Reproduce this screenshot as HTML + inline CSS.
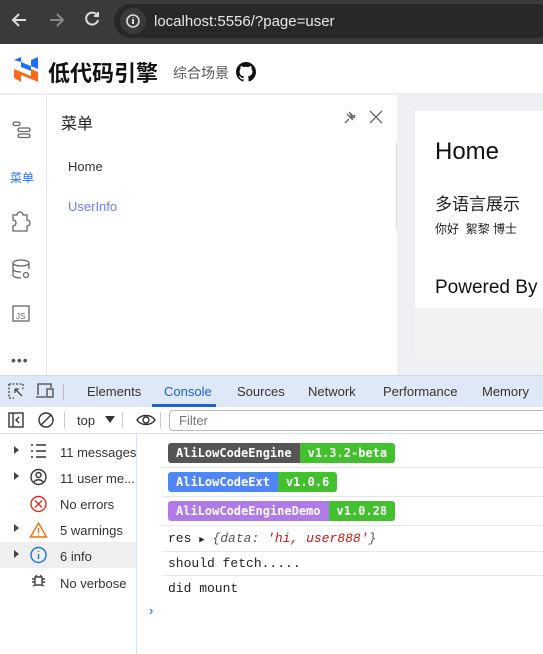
<!DOCTYPE html>
<html><head><meta charset="utf-8"><style>
*{margin:0;padding:0;box-sizing:border-box}
body{width:543px;height:654px;overflow:hidden;font-family:"Liberation Sans","Noto Sans CJK SC",sans-serif;background:#fff;position:relative}
.a{position:absolute}
.mono{font-family:"Liberation Mono","DejaVu Sans Mono",monospace}
.badge{position:absolute;height:20px;font:bold 12px "DejaVu Sans Mono","Liberation Mono",monospace;color:#fff;line-height:20px;display:flex;border-radius:3px;overflow:hidden}
.badge span{padding:0 8px}
.g{background:#42c02e}
.sb{font-size:13px;color:#333}
.line{position:absolute;left:162px;right:0;height:1px;background:#e4e8ee}
</style></head><body>
<div class="a" style="left:0;top:0;width:543px;height:44px;background:#3a3a3a"></div>
<div class="a" style="left:114px;top:4px;width:440px;height:34px;border-radius:17px;background:#282828"></div>
<div class="a" style="left:120px;top:8px;width:26px;height:26px;border-radius:13px;background:#3a3a3a"></div>
<svg class="a" style="left:0;top:0" width="150" height="44"><g stroke="#ddd" stroke-width="2" fill="none"><path d="M26 20H13M19 14l-6 6 6 6"/><path d="M50 20h13M57 14l6 6-6 6" stroke="#888"/><path d="M97 15a6 6 0 1 0 1 5M98 12v4h-4"/><circle cx="133" cy="21" r="6" stroke-width="1.6"/><path d="M133 19v5M133 17v.5"/></g></svg>
<div class="a" style="left:154px;top:13px;font-size:15px;color:#e8e8e8">localhost:5556/?page=user</div>
<svg class="a" style="left:14px;top:56px" width="24" height="26"><path d="M0 4l7-3v10l10 4V4l7-3v12L7 6z" fill="#1f6fff"/><path d="M0 13l17 7V13l7 3v10l-7-3-10-4v7L0 22z" fill="#ff6a1a"/></svg>
<div class="a" style="left:48px;top:56px;font-size:22px;font-weight:bold;color:#111">低代码引擎</div>
<div class="a" style="left:173px;top:63px;font-size:14px;color:#555">综合场景</div>
<svg class="a" style="left:236px;top:62px" width="20" height="20" viewBox="0 0 16 16"><path fill="#111" d="M8 0C3.6 0 0 3.6 0 8c0 3.5 2.3 6.5 5.5 7.6.4.1.5-.2.5-.4v-1.4c-2.2.5-2.7-1-2.7-1-.4-.9-.9-1.2-.9-1.2-.7-.5.1-.5.1-.5.8.1 1.2.8 1.2.8.7 1.2 1.9.9 2.3.7.1-.5.3-.9.5-1.1-1.8-.2-3.6-.9-3.6-4 0-.9.3-1.6.8-2.1-.1-.2-.4-1 .1-2.1 0 0 .7-.2 2.2.8.6-.2 1.3-.3 2-.3s1.4.1 2 .3c1.5-1 2.2-.8 2.2-.8.4 1.1.2 1.9.1 2.1.5.6.8 1.3.8 2.1 0 3.1-1.9 3.7-3.6 3.9.3.3.5.8.5 1.5v2.2c0 .2.1.5.6.4C13.7 14.5 16 11.5 16 8c0-4.4-3.6-8-8-8z"/></svg>
<div class="a" style="left:0;top:93px;width:543px;height:2px;background:#edeef3"></div>
<div class="a" style="left:46px;top:95px;width:1px;height:280px;background:#e8e9ee"></div>
<svg class="a" style="left:0;top:95px" width="46" height="280" fill="none" stroke="#666" stroke-width="1.3">
<rect x="13" y="27" width="7" height="3.5" rx="1.7"/><rect x="18" y="33" width="12" height="3.5" rx="1.7"/><rect x="18" y="39" width="12" height="3.5" rx="1.7"/>
<path d="M13 120h4a3 3 0 0 1 6 0h4v5a3 3 0 0 1 0 6v5H13v-5a3 3 0 0 0 0-6z"/>
<ellipse cx="21" cy="168" rx="8" ry="3"/><path d="M13 168v12c0 2 4 3 8 3M29 168v6M13 174c0 2 4 3 8 3"/><circle cx="26" cy="180" r="2.5"/>
<rect x="13" y="211" width="16" height="15"/>
</svg>
<div class="a" style="left:16px;top:312px;font-size:8px;color:#666">JS</div>
<div class="a" style="left:10px;top:169px;font-size:12px;color:#1f6fff">菜单</div>
<div class="a" style="left:11px;top:352px;font-size:14px;color:#555;letter-spacing:1px">•••</div>
<div class="a" style="left:61px;top:110px;font-size:16px;color:#222">菜单</div>
<svg class="a" style="left:342px;top:109px" width="42" height="16" fill="none" stroke="#666" stroke-width="1.3"><path d="M3 14l4-4M5 5l6 6M7 3l6 6M8 4l2 5 3-3"/><path d="M28 2l12 12M40 2L28 14"/></svg>
<div class="a" style="left:68px;top:159px;font-size:13px;color:#333">Home</div>
<div class="a" style="left:68px;top:199px;font-size:13px;color:#6c7cff">UserInfo</div>
<div class="a" style="left:397px;top:95px;width:146px;height:280px;background:#eef0f3"></div>
<div class="a" style="left:396px;top:143px;width:1px;height:87px;background:#ddd"></div>
<div class="a" style="left:415px;top:111px;width:128px;height:247px;background:#f2f2f3"></div>
<div class="a" style="left:415px;top:111px;width:128px;height:197px;background:#fff"></div>
<div class="a" style="left:435px;top:138px;font-size:24px;color:#111">Home</div>
<div class="a" style="left:435px;top:190px;font-size:17px;color:#222">多语言展示</div>
<div class="a" style="left:435px;top:220px;font-size:12px;color:#222">你好&nbsp; 絮黎 博士</div>
<div class="a" style="left:435px;top:277px;font-size:19px;color:#111">Powered By</div>
<div class="a" style="left:0;top:375px;width:543px;height:32px;background:#dfe8f6;border-top:1px solid #cfd8e6"></div>
<svg class="a" style="left:0;top:375px" width="70" height="32" fill="none" stroke="#444" stroke-width="1.3"><path d="M9 9h14v5M9 9v14h5" stroke-dasharray="2 1.5"/><path d="M15 14l7 7M15 14h4M15 14v4"/><path d="M38 20V9h13v4M36 22h10"/><rect x="47" y="14" width="6" height="8"/></svg>
<div class="a" style="left:63px;top:384px;width:1px;height:16px;background:#bbb"></div>
<div class="a sb" style="left:87px;top:384px;color:#333">Elements</div>
<div class="a sb" style="left:164px;top:384px;color:#1a62d6">Console</div>
<div class="a" style="left:152px;top:404px;width:64px;height:3px;background:#1a62d6"></div>
<div class="a sb" style="left:237px;top:384px">Sources</div>
<div class="a sb" style="left:308px;top:384px">Network</div>
<div class="a sb" style="left:383px;top:384px">Performance</div>
<div class="a sb" style="left:482px;top:384px">Memory</div>
<div class="a" style="left:0;top:407px;width:543px;height:27px;background:#fff;border-bottom:1px solid #d6e2f3"></div>
<svg class="a" style="left:0;top:407px" width="170" height="27" fill="none" stroke="#333" stroke-width="1.4"><rect x="9" y="6" width="14" height="14"/><path d="M13 6v14M19 10l-3 3 3 3" /><circle cx="46" cy="13" r="7"/><path d="M41 18l10-10"/><path d="M137 13c4-6 14-6 18 0-4 6-14 6-18 0z"/><circle cx="146" cy="13" r="3"/></svg>
<div class="a" style="left:64px;top:412px;width:1px;height:16px;background:#ccc"></div>
<div class="a sb" style="left:77px;top:413px">top</div>
<div class="a" style="left:105px;top:416px;border:5px solid transparent;border-top:7px solid #333"></div>
<div class="a" style="left:122px;top:412px;width:1px;height:16px;background:#ccc"></div>
<div class="a" style="left:160px;top:412px;width:1px;height:16px;background:#ccc"></div>
<div class="a" style="left:169px;top:410px;width:380px;height:21px;border:1px solid #bbb;border-radius:4px"></div>
<div class="a" style="left:179px;top:413px;font-size:13px;color:#777">Filter</div>
<div class="a" style="left:136px;top:434px;width:1px;height:220px;background:#d6e2f3"></div>
<div class="a" style="left:0;top:542px;width:136px;height:26px;background:#efefef"></div>
<svg class="a" style="left:0;top:434px" width="60" height="160" fill="none" stroke-width="1.4">
<g fill="#444"><path d="M14 12l5 4-5 4z"/><path d="M14 38l5 4-5 4z"/><path d="M14 90l5 4-5 4z"/><path d="M14 116l5 4-5 4z"/></g>
<path stroke="#333" d="M31 11h2M36 11h10M31 17h2M36 17h10M31 23h2M36 23h10"/>
<circle cx="38.5" cy="43" r="7.5" stroke="#333"/><circle cx="38.5" cy="41" r="2.5" stroke="#333"/><path stroke="#333" d="M34 48c2-3 7-3 9 0"/>
<circle cx="38.5" cy="70" r="7.5" stroke="#d93025"/><path stroke="#d93025" d="M35 66.5l7 7M42 66.5l-7 7"/>
<path stroke="#e8710a" d="M38.5 89l8 14h-16z"/><path stroke="#e8710a" d="M38.5 94v5M38.5 100.5v1"/>
<circle cx="38.5" cy="121" r="7.5" stroke="#1a73e8"/><path stroke="#1a73e8" d="M38.5 120v5M38.5 117v1"/>
<path stroke="#444" d="M35 143h7v8h-7zM32 145h3M42 145h3M32 148h3M42 148h3M33 152l2-1M44 152l-2-1M36 141l1 2M41 141l-1 2"/>
</svg>
<div class="a sb" style="left:60px;top:445px">11 messages</div>
<div class="a sb" style="left:60px;top:471px">11 user me...</div>
<div class="a sb" style="left:60px;top:497px">No errors</div>
<div class="a sb" style="left:60px;top:523px">5 warnings</div>
<div class="a sb" style="left:60px;top:549px">6 info</div>
<div class="a sb" style="left:60px;top:576px">No verbose</div>
<div class="badge" style="left:168px;top:443px"><span style="background:#555">AliLowCodeEngine</span><span class="g">v1.3.2-beta</span></div>
<div class="line" style="top:467px;left:162px"></div>
<div class="badge" style="left:168px;top:472px"><span style="background:#4f87f7">AliLowCodeExt</span><span class="g">v1.0.6</span></div>
<div class="line" style="top:496px"></div>
<div class="badge" style="left:168px;top:501px"><span style="background:#b07ae8">AliLowCodeEngineDemo</span><span class="g">v1.0.28</span></div>
<div class="line" style="top:525px"></div>
<div class="a mono" style="left:168px;top:531px;font-size:13px;color:#222;white-space:pre">res <span style="font-size:9px">▶</span> <i style="color:#555">{data: <span style="color:#c41a16">'hi, user888'</span>}</i></div>
<div class="line" style="top:551px"></div>
<div class="a mono" style="left:168px;top:556px;font-size:13px;color:#222">should fetch.....</div>
<div class="line" style="top:575px"></div>
<div class="a mono" style="left:168px;top:581px;font-size:13px;color:#222">did mount</div>
<div class="a" style="left:149px;top:603px;font-size:13px;color:#1a62d6">›</div>
</body></html>
